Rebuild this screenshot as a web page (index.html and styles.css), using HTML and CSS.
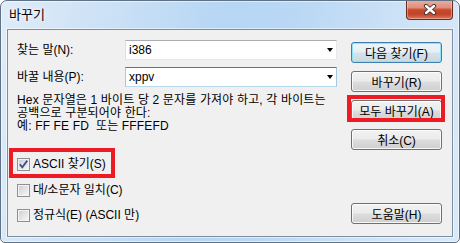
FILE: index.html
```html
<!DOCTYPE html>
<html lang="ko">
<head>
  <meta charset="UTF-8">
  <title>바꾸기</title>
  <link rel="stylesheet" href="styles.css">
</head>
<body>

  <div class="window">
    <div class="titlebar">
      <span class="title">바꾸기</span>
      <button class="close">
        <svg width="14" height="11" viewBox="0 0 14 11">
          <path d="M3 2 L11 9 M11 2 L3 9" stroke="#3b2f2f" stroke-width="4.2" stroke-linecap="round"/>
          <path d="M3 2 L11 9 M11 2 L3 9" stroke="#fff" stroke-width="2.4" stroke-linecap="round"/>
        </svg>
      </button>
    </div>

    <div class="client">

      <!-- Search / replace fields -->
      <div class="form">
        <div class="row">
          <label>찾는 말(N):</label>
          <div class="combo">i386<span class="arrow"></span></div>
        </div>
        <div class="row">
          <label>바꿀 내용(P):</label>
          <div class="combo focus">xppv<span class="arrow"></span></div>
        </div>

        <p class="hint">Hex 문자열은 1 바이트 당 2 문자를 가져야 하고, 각 바이트는<br>공백으로 구분되어야 한다:<br>예: FF FE FD&nbsp; 또는 FFFEFD</p>

        <div class="checks">
          <label class="check mark"><span class="box checked">
            <svg width="11" height="11" viewBox="0 0 11 11"><path d="M1.8 5.2 L4.3 8.3 L9.3 1.6" fill="none" stroke="#3a4f8c" stroke-width="1.8"/></svg>
          </span>ASCII 찾기(S)</label>
          <label class="check"><span class="box"></span>대/소문자 일치(C)</label>
          <label class="check"><span class="box"></span>정규식(E) (ASCII 만)</label>
        </div>
      </div>

      <!-- Command buttons -->
      <div class="buttons">
        <button class="default">다음 찾기(F)</button>
        <button>바꾸기(R)</button>
        <button class="mark">모두 바꾸기(A)</button>
        <button>취소(C)</button>
        <button class="help">도움말(H)</button>
      </div>

    </div>
  </div>

</body>
</html>
```

FILE: styles.css
```css
body {
  margin: 0;
  font-family: 'Liberation Sans', 'Noto Sans CJK KR', sans-serif;
  font-size: 12px;
  color: #000;
  background: #fff;
}

.window {
  width: 460px;
  height: 243px;
  box-sizing: border-box;
  border: 1px solid #5f7185;
  border-radius: 7px 7px 5px 5px;
  box-shadow: inset 0 0 0 1px rgba(255,255,255,0.55);
  background: linear-gradient(100deg, #dfecf8 0%, #cfe3f6 18%, #b6d6f4 45%, #bad8f4 60%, #d0e4f7 85%, #d9e9f8 100%);
  display: flex;
  flex-direction: column;
  overflow: hidden;
}

.titlebar {
  height: 28px;
  display: flex;
  justify-content: space-between;
  align-items: flex-start;
  padding-left: 8px;
}

.title {
  margin-top: 6px;
  line-height: 16px;
  font-size: 13px;
  text-shadow: 0 0 6px #fff, 0 0 3px #fff;
}

.close {
  width: 47px;
  height: 20px;
  margin: -1px 6px 0 0;
  padding: 0;
  border: 1px solid #6a2a1f;
  border-top: none;
  border-radius: 0 0 4px 4px;
  background: linear-gradient(#eab0a2 0%, #df8f7c 40%, #c8482e 52%, #c34329 75%, #d77a60 100%);
  box-shadow: inset 0 0 0 1px rgba(255,210,200,0.45);
  display: flex;
  align-items: center;
  justify-content: center;
}

.client {
  flex: 1;
  margin: 0 6px 5px 6px;
  border: 1px solid #7d8ea0;
  box-shadow: 0 0 0 1px rgba(255,255,255,0.5);
  background: #f0f0f0;
  display: flex;
  gap: 14px;
  padding: 10px 10px 12px 9px;
}

.form {
  width: 320px;
  display: flex;
  flex-direction: column;
}

.row {
  display: flex;
  align-items: center;
  height: 20px;
  margin-bottom: 7px;
}

.row label {
  width: 108px;
  line-height: 14px;
}

.combo {
  flex: 1;
  height: 20px;
  box-sizing: border-box;
  border: 1px solid #e3e9ef;
  border-top-color: #abadb3;
  border-left-color: #dbdfe6;
  background: #fff;
  padding-left: 3px;
  line-height: 18px;
  display: flex;
  align-items: center;
  justify-content: space-between;
}

.combo.focus {
  border-color: #b7d9ed;
  border-top-color: #3d7bad;
  border-left-color: #a4c9e3;
  border-right-color: #a4c9e3;
}

.arrow {
  width: 0;
  height: 0;
  margin-right: 3px;
  border-left: 3.5px solid transparent;
  border-right: 3.5px solid transparent;
  border-top: 4px solid #000;
}

.hint {
  margin: 0;
  line-height: 13px;
  letter-spacing: 0.15px;
}

.checks {
  margin-top: 25px;
  display: flex;
  flex-direction: column;
  gap: 12.5px;
}

.check {
  align-self: flex-start;
  display: flex;
  align-items: center;
  gap: 3px;
  height: 13px;
  line-height: 13px;
}

.box {
  width: 13px;
  height: 13px;
  box-sizing: border-box;
  border: 1px solid #8e8f8f;
  background: linear-gradient(135deg, #c9ccd1 0%, #e4e5e7 55%, #f8f8f8 100%);
  box-shadow: inset 0 0 0 1px #f4f4f4;
  display: flex;
  align-items: center;
  justify-content: center;
}

.buttons {
  width: 91px;
  margin-top: 2px;
  display: flex;
  flex-direction: column;
  gap: 8px;
}

.buttons button {
  height: 21px;
  padding: 0;
  font-family: inherit;
  font-size: 12px;
  color: #000;
  border: 1px solid #707070;
  border-radius: 3px;
  background: linear-gradient(#f2f2f2 0%, #ebebeb 48%, #dddddd 52%, #cfcfcf 100%);
  box-shadow: inset 0 0 0 1px rgba(255,255,255,0.8);
}

.buttons button.default {
  border-color: #3c7fb1;
  box-shadow: inset 0 0 0 1px #8ee3fb;
  background: linear-gradient(#eef5f9 0%, #e6eff4 48%, #d6e3ea 52%, #c9d8e0 100%);
}

.buttons .help {
  margin-top: auto;
}

.mark {
  position: relative;
}

.mark::after {
  content: '';
  position: absolute;
  border: 4px solid #ed1c24;
}

.check.mark::after {
  top: -10px;
  bottom: -7px;
  left: -8px;
  right: -9px;
}

button.mark::after {
  top: -6px;
  bottom: -2px;
  left: -5px;
  right: -4px;
}
```
